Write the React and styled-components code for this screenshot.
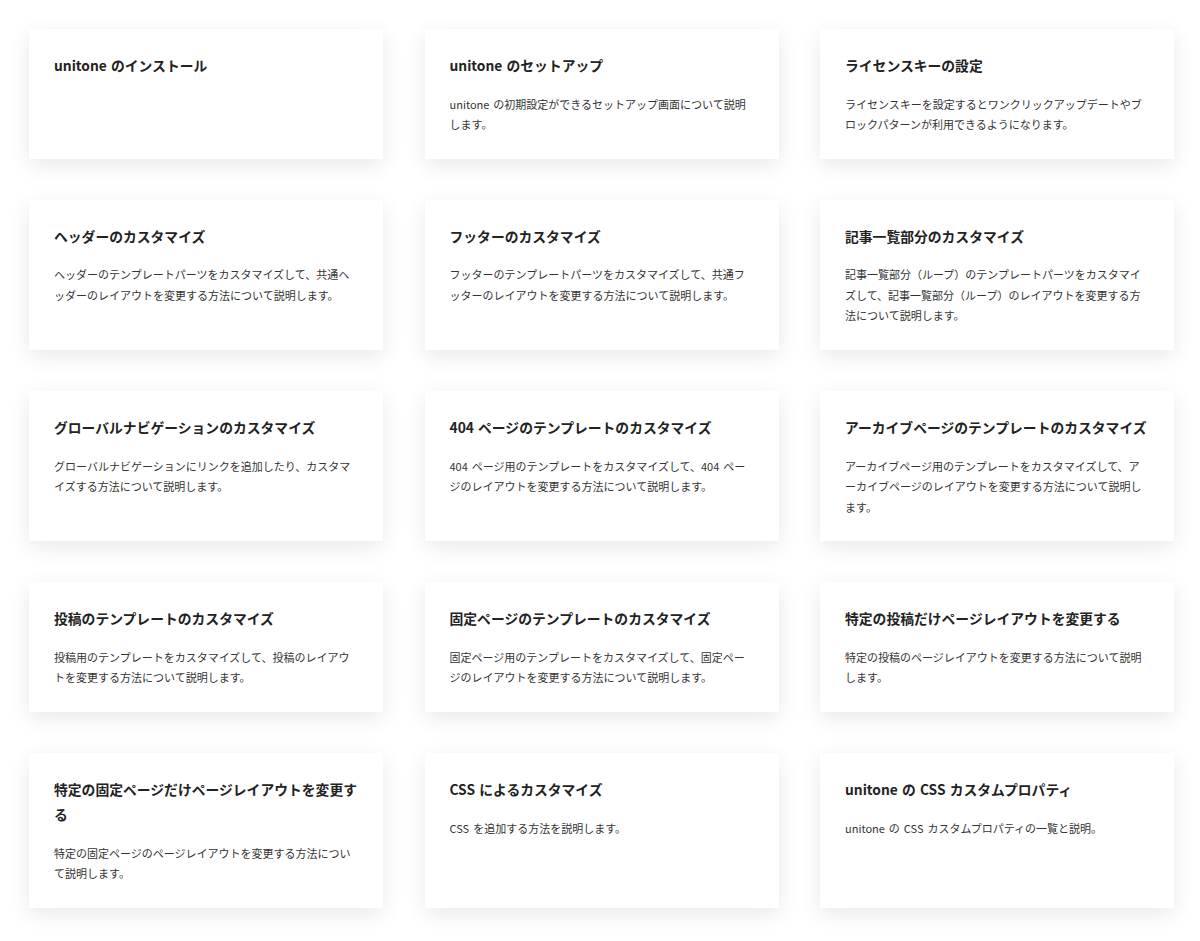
import React from "react";
import styled, { createGlobalStyle } from "styled-components";

const GlobalStyle = createGlobalStyle`
  body {
    margin: 0;
    background: #fff;
    font-family: "Noto Sans CJK JP", "Noto Sans", sans-serif;
    color: #333;
  }
`;

const Grid = styled.div`
  display: grid;
  grid-template-columns: repeat(3, 1fr);
  column-gap: 41.5px;
  row-gap: 41.3px;
  padding: 29px 26px 33px 29px;
`;

const Card = styled.div`
  background: #fff;
  padding: 24px 25px 24px;
  box-shadow: 0 6px 20px rgba(0, 0, 0, 0.09);
`;

const Title = styled.h3`
  margin: 0;
  font-size: 13.8px;
  font-weight: 700;
  line-height: 25px;
  color: #222;
  word-spacing: 1px;
`;

const Text = styled.p`
  margin: 15.5px 0 0;
  font-size: 11px;
  line-height: 20.5px;
  color: #333;
  word-spacing: 1.5px;
`;

const items = [
  { title: "unitone のインストール" },
  {
    title: "unitone のセットアップ",
    text: "unitone の初期設定ができるセットアップ画面について説明します。",
  },
  {
    title: "ライセンスキーの設定",
    text: "ライセンスキーを設定するとワンクリックアップデートやブロックパターンが利用できるようになります。",
  },
  {
    title: "ヘッダーのカスタマイズ",
    text: "ヘッダーのテンプレートパーツをカスタマイズして、共通ヘッダーのレイアウトを変更する方法について説明します。",
  },
  {
    title: "フッターのカスタマイズ",
    text: "フッターのテンプレートパーツをカスタマイズして、共通フッターのレイアウトを変更する方法について説明します。",
  },
  {
    title: "記事一覧部分のカスタマイズ",
    text: "記事一覧部分（ループ）のテンプレートパーツをカスタマイズして、記事一覧部分（ループ）のレイアウトを変更する方法について説明します。",
  },
  {
    title: "グローバルナビゲーションのカスタマイズ",
    text: "グローバルナビゲーションにリンクを追加したり、カスタマイズする方法について説明します。",
  },
  {
    title: "404 ページのテンプレートのカスタマイズ",
    text: "404 ページ用のテンプレートをカスタマイズして、404 ペ\u200Bージのレイアウトを変更する方法について説明します。",
  },
  {
    title: "アーカイブページのテンプレートのカスタマイズ",
    text: "アーカイブページ用のテンプレートをカスタマイズして、アーカイブページのレイアウトを変更する方法について説明します。",
  },
  {
    title: "投稿のテンプレートのカスタマイズ",
    text: "投稿用のテンプレートをカスタマイズして、投稿のレイアウトを変更する方法について説明します。",
  },
  {
    title: "固定ページのテンプレートのカスタマイズ",
    text: "固定ページ用のテンプレートをカスタマイズして、固定ページのレイアウトを変更する方法について説明します。",
  },
  {
    title: "特定の投稿だけページレイアウトを変更する",
    text: "特定の投稿のページレイアウトを変更する方法について説明します。",
  },
  {
    title: "特定の固定ページだけページレイアウトを変更する",
    text: "特定の固定ページのページレイアウトを変更する方法について説明します。",
  },
  {
    title: "CSS によるカスタマイズ",
    text: "CSS を追加する方法を説明します。",
  },
  {
    title: "unitone の CSS カスタムプロパティ",
    text: "unitone の CSS カスタムプロパティの一覧と説明。",
  },
];

export default function App() {
  return (
    <>
      <GlobalStyle />
      <Grid>
        {items.map((item) => (
          <Card key={item.title}>
            <Title>{item.title}</Title>
            {item.text && <Text>{item.text}</Text>}
          </Card>
        ))}
      </Grid>
    </>
  );
}
